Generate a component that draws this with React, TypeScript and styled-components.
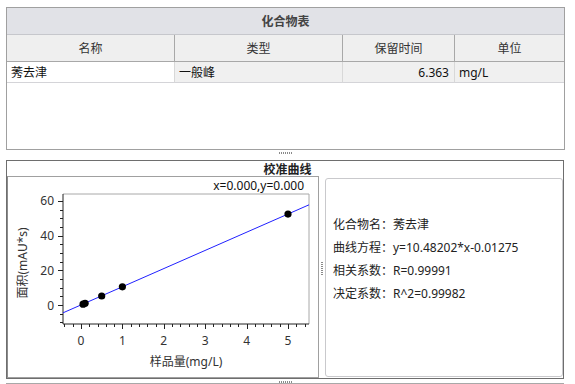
import styled, { createGlobalStyle } from "styled-components";

// #region CSS
const GlobalStyle = createGlobalStyle`
  html, body {
    margin: 0;
    padding: 0;
    background: #ffffff;
  }
  body {
    font-family: "Noto Sans", "Noto Sans CJK SC", sans-serif;
    font-size: 12px;
    color: #222;
  }
`;

const Page = styled.div`
  width: 575px;
  height: 384px;
  padding: 7px 0 0 6px;
  box-sizing: border-box;
  overflow: hidden;
  display: flex;
  flex-direction: column;
`;

const TablePanel = styled.div`
  width: 559px;
  height: 143px;
  box-sizing: border-box;
  border: 1px solid #a0a0a0;
  display: flex;
  flex-direction: column;
`;

const TableTitle = styled.div`
  height: 26px;
  background: #e1e2e7;
  border-bottom: 1px solid #c6c7cc;
  display: flex;
  align-items: center;
  justify-content: center;
  font-weight: bold;
  color: #444;
`;

const Row = styled.div<{ $height: number }>`
  display: grid;
  grid-template-columns: 168px 168px 112px 1fr;
  height: ${(p) => p.$height}px;
`;

const HeadCell = styled.div`
  background: #efefef;
  border-right: 1px solid #a8a8a8;
  border-bottom: 1px solid #a8a8a8;
  display: flex;
  align-items: center;
  justify-content: center;
  color: #333;
  &:last-child {
    border-right: none;
  }
`;

const DataCell = styled.div<{ $align?: "left" | "right"; $white?: boolean }>`
  background: ${(p) => (p.$white ? "#ffffff" : "#f0f0f0")};
  border-right: 1px solid #d8d8d8;
  border-bottom: 1px solid #d4d4d8;
  display: flex;
  align-items: center;
  justify-content: ${(p) => (p.$align === "right" ? "flex-end" : "flex-start")};
  padding: 0 5px 0 4px;
  color: #111;
  &:last-child {
    border-right: none;
  }
`;

const HSplitter = styled.div<{ $height: number }>`
  width: 559px;
  height: ${(p) => p.$height}px;
  display: flex;
  justify-content: center;
  padding-top: 2px;
  box-sizing: border-box;
`;

const HGrip = styled.div`
  width: 13px;
  height: 2px;
  background: repeating-linear-gradient(
    to right,
    #8a8a8a 0 1px,
    transparent 1px 2px
  );
`;

const CurvePanel = styled.div`
  width: 558px;
  height: 219px;
  box-sizing: border-box;
  border: 1px solid #6e6e6e;
  display: flex;
  flex-direction: column;
`;

const CurveTitle = styled.div`
  height: 15px;
  padding: 3px 0 0 5px;
  box-sizing: border-box;
  display: flex;
  align-items: flex-start;
  justify-content: center;
  font-weight: bold;
  color: #222;
  line-height: 12px;
  overflow: visible;
`;

const CurveBody = styled.div`
  display: flex;
  height: 202px;
`;

const ChartBox = styled.div`
  width: 312px;
  height: 202px;
  box-sizing: border-box;
  border: 1px solid #a0a0a0;
  border-left-color: #8c8c8c;
`;

const VSplitter = styled.div`
  width: 6px;
  display: flex;
  align-items: center;
  justify-content: center;
  padding-bottom: 16px;
`;

const VGrip = styled.div`
  width: 2px;
  height: 14px;
  background: repeating-linear-gradient(
    to bottom,
    #8a8a8a 0 1px,
    transparent 1px 2px
  );
`;

const InfoBox = styled.div`
  width: 238px;
  height: 199px;
  margin-top: 2px;
  box-sizing: border-box;
  border: 1px solid #c9c9cc;
  border-radius: 3px;
  padding: 34px 0 0 7px;
  display: flex;
  flex-direction: column;
`;

const InfoLine = styled.div`
  height: 23px;
  line-height: 23px;
  color: #222;
  white-space: nowrap;
`;

const NextPanelTop = styled.div`
  width: 558px;
  border-top: 1px solid #a8a8a8;
`;

const ChartText = styled.text`
  font-family: "Noto Sans", "Noto Sans CJK SC", sans-serif;
  font-size: 12px;
  fill: #333;
`;
// #endregion

const columns = ["名称", "类型", "保留时间", "单位"];

const points = [
  [0.05, 0.5],
  [0.1, 1.0],
  [0.5, 5.2],
  [1, 10.5],
  [5, 52.4],
];

const info = [
  "化合物名：莠去津",
  "曲线方程：y=10.48202*x-0.01275",
  "相关系数：R=0.99991",
  "决定系数：R^2=0.99982",
];

// plot mapping (px relative to chart box)
const px = (v: number) => 73 + 41.4 * v;
const py = (v: number) => 128 - 1.735 * v;

function CalibrationChart() {
  const left = 55;
  const right = 301;
  const top = 17;
  const bottom = 147;

  const xMinor: number[] = [];
  for (let v = -0.4; v <= 5.41; v += 0.2) xMinor.push(Math.round(v * 10) / 10);
  const yMinor: number[] = [];
  for (let v = -10; v <= 60; v += 5) yMinor.push(v);

  const lineY = (x: number) => 10.48202 * x - 0.01275;

  return (
    <svg width="310" height="200" viewBox="0 0 310 200">
      <ChartText x="296" y="13" textAnchor="end" style={{ fill: "#111" }}>
        x=0.000,y=0.000
      </ChartText>

      <line x1={left} y1={top} x2={right} y2={top} stroke="#a8a8a8" />
      <line x1={right} y1={top} x2={right} y2={bottom} stroke="#a8a8a8" />
      <line x1={left} y1={top} x2={left} y2={bottom} stroke="#222" />
      <line x1={left} y1={bottom} x2={right} y2={bottom} stroke="#222" />

      {yMinor.map((v) => (
        <line
          key={"y" + v}
          x1={left}
          x2={v % 20 === 0 ? left - 5 : left - 3}
          y1={Math.round(py(v)) + 0.5}
          y2={Math.round(py(v)) + 0.5}
          stroke="#222"
        />
      ))}
      {[0, 20, 40, 60].map((v) => (
        <ChartText key={"yl" + v} x={left - 9} y={py(v) + 4.5} textAnchor="end">
          {v}
        </ChartText>
      ))}

      {xMinor.map((v) => (
        <line
          key={"x" + v}
          x1={Math.round(px(v)) + 0.5}
          x2={Math.round(px(v)) + 0.5}
          y1={bottom}
          y2={Number.isInteger(v) ? bottom + 5 : bottom + 3}
          stroke="#222"
        />
      ))}
      {[0, 1, 2, 3, 4, 5].map((v) => (
        <ChartText key={"xl" + v} x={px(v)} y={bottom + 21} textAnchor="middle">
          {v}
        </ChartText>
      ))}

      <line
        x1={left}
        y1={py(lineY(-0.43))}
        x2={right}
        y2={py(lineY(5.51))}
        stroke="#2020ff"
        strokeWidth="1"
      />

      {points.map(([x, y]) => (
        <circle key={x} cx={px(x)} cy={py(y)} r="3.6" fill="#000" />
      ))}

      <ChartText x="178" y="189" textAnchor="middle">
        样品量(mg/L)
      </ChartText>
      <ChartText x="15" y="86" textAnchor="middle" transform="rotate(-90 15 86)" dy="4">
        面积(mAU*s)
      </ChartText>
    </svg>
  );
}

export default function App() {
  return (
    <>
      <GlobalStyle />
      <Page>
        <TablePanel>
          <TableTitle>化合物表</TableTitle>
          <Row $height={27}>
            {columns.map((c) => (
              <HeadCell key={c}>{c}</HeadCell>
            ))}
          </Row>
          <Row $height={21}>
            <DataCell $white>莠去津</DataCell>
            <DataCell>一般峰</DataCell>
            <DataCell $align="right">6.363</DataCell>
            <DataCell>mg/L</DataCell>
          </Row>
        </TablePanel>

        <HSplitter $height={10}>
          <HGrip />
        </HSplitter>

        <CurvePanel>
          <CurveTitle>校准曲线</CurveTitle>
          <CurveBody>
            <ChartBox>
              <CalibrationChart />
            </ChartBox>
            <VSplitter>
              <VGrip />
            </VSplitter>
            <InfoBox>
              {info.map((line) => (
                <InfoLine key={line}>{line}</InfoLine>
              ))}
            </InfoBox>
          </CurveBody>
        </CurvePanel>

        <HSplitter $height={4}>
          <HGrip />
        </HSplitter>
        <NextPanelTop />
      </Page>
    </>
  );
}
